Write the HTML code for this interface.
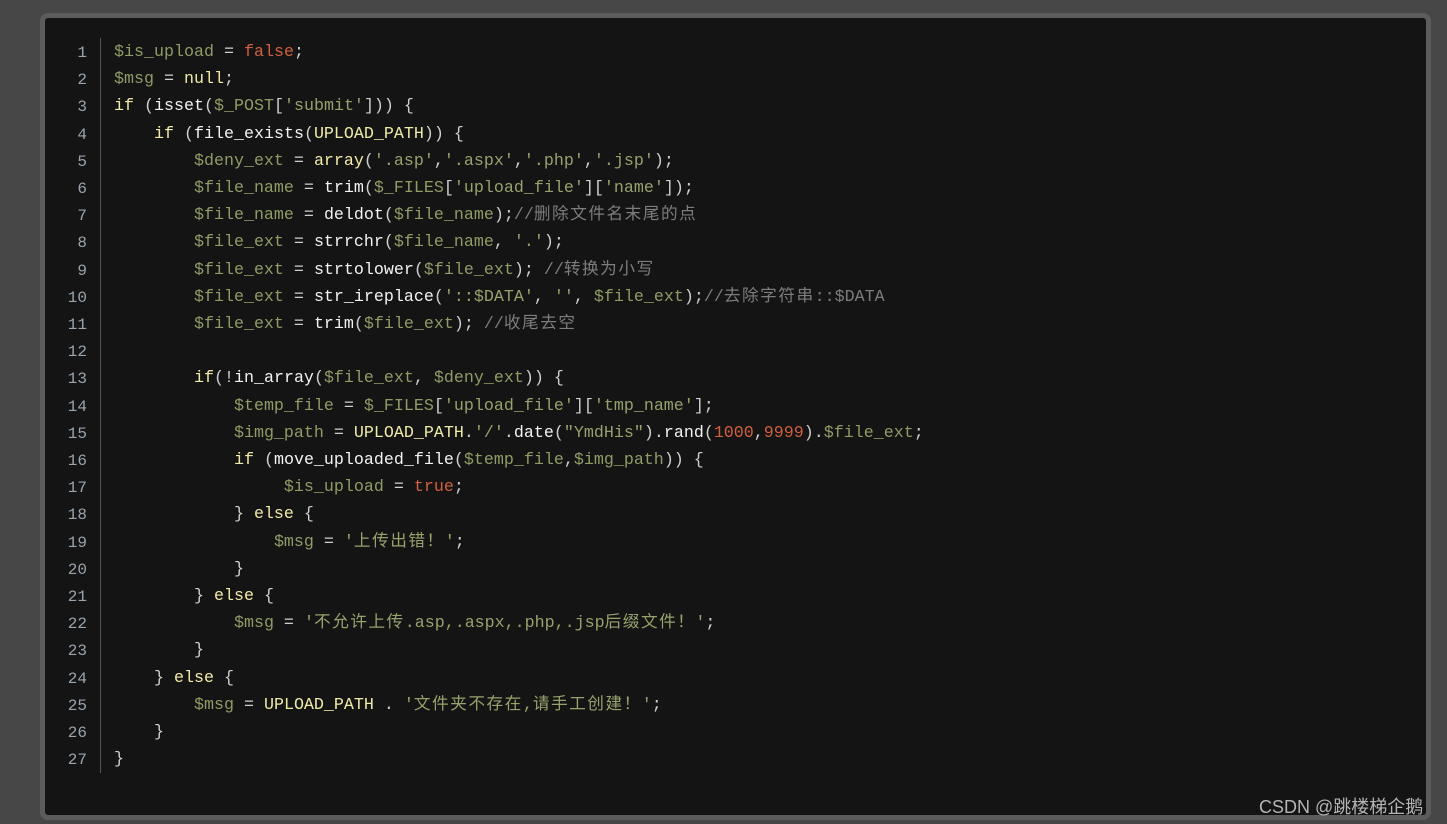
<!DOCTYPE html><html><head><meta charset="utf-8"><style>
body{margin:0;width:1447px;height:824px;background:#474747;overflow:hidden;position:relative;font-family:"Liberation Mono","Noto Sans CJK SC",monospace}
.panel{position:absolute;left:40px;top:13px;width:1381px;height:797px;border:5px solid #5c5c5c;border-radius:8px;background:#141414}
.gut{position:absolute;left:100px;top:38px;width:1px;height:735px;background:#555}
.ln{position:absolute;left:50px;top:40px;width:37px;text-align:right;color:#9aa4ad;font-size:16px;line-height:27.2px}
.code{position:absolute;left:114px;top:39px;font-size:16.67px;line-height:27.2px;color:#cfcfcf;white-space:pre}
.v{color:#8f9c66}.k{color:#f2eaa8}.f{color:#f2f2f2}.b{color:#d0603f}.s{color:#96a26c}.c{color:#7d7d7d}.u{color:#eeeaa8}
.z{letter-spacing:1.5px}
.wm{position:absolute;left:1259px;top:793px;color:#b5b5b5;font:18px "Liberation Sans","Noto Sans CJK SC",sans-serif}
</style></head><body>
<div class="panel"></div><div class="gut"></div>
<div class="ln">1<br>2<br>3<br>4<br>5<br>6<br>7<br>8<br>9<br>10<br>11<br>12<br>13<br>14<br>15<br>16<br>17<br>18<br>19<br>20<br>21<br>22<br>23<br>24<br>25<br>26<br>27</div>
<div class="code"><span class="v">$is_upload</span> = <span class="b">false</span>;
<span class="v">$msg</span> = <span class="k">null</span>;
<span class="k">if</span> (<span class="f">isset</span>(<span class="v">$_POST</span>[<span class="s">'submit'</span>])) {
    <span class="k">if</span> (<span class="f">file_exists</span>(<span class="u">UPLOAD_PATH</span>)) {
        <span class="v">$deny_ext</span> = <span class="k">array</span>(<span class="s">'.asp'</span>,<span class="s">'.aspx'</span>,<span class="s">'.php'</span>,<span class="s">'.jsp'</span>);
        <span class="v">$file_name</span> = <span class="f">trim</span>(<span class="v">$_FILES</span>[<span class="s">'upload_file'</span>][<span class="s">'name'</span>]);
        <span class="v">$file_name</span> = <span class="f">deldot</span>(<span class="v">$file_name</span>);<span class="c">//<span class="z">删除文件名末尾的点</span></span>
        <span class="v">$file_ext</span> = <span class="f">strrchr</span>(<span class="v">$file_name</span>, <span class="s">'.'</span>);
        <span class="v">$file_ext</span> = <span class="f">strtolower</span>(<span class="v">$file_ext</span>); <span class="c">//<span class="z">转换为小写</span></span>
        <span class="v">$file_ext</span> = <span class="f">str_ireplace</span>(<span class="s">'::$DATA'</span>, <span class="s">''</span>, <span class="v">$file_ext</span>);<span class="c">//<span class="z">去除字符串</span>::$DATA</span>
        <span class="v">$file_ext</span> = <span class="f">trim</span>(<span class="v">$file_ext</span>); <span class="c">//<span class="z">收尾去空</span></span>

        <span class="k">if</span>(!<span class="f">in_array</span>(<span class="v">$file_ext</span>, <span class="v">$deny_ext</span>)) {
            <span class="v">$temp_file</span> = <span class="v">$_FILES</span>[<span class="s">'upload_file'</span>][<span class="s">'tmp_name'</span>];
            <span class="v">$img_path</span> = <span class="u">UPLOAD_PATH</span>.<span class="s">'/'</span>.<span class="f">date</span>(<span class="s">"YmdHis"</span>).<span class="f">rand</span>(<span class="b">1000</span>,<span class="b">9999</span>).<span class="v">$file_ext</span>;
            <span class="k">if</span> (<span class="f">move_uploaded_file</span>(<span class="v">$temp_file</span>,<span class="v">$img_path</span>)) {
                 <span class="v">$is_upload</span> = <span class="b">true</span>;
            } <span class="k">else</span> {
                <span class="v">$msg</span> = <span class="s">'<span class="z">上传出错！</span>'</span>;
            }
        } <span class="k">else</span> {
            <span class="v">$msg</span> = <span class="s">'<span class="z">不允许上传</span>.asp,.aspx,.php,.jsp<span class="z">后缀文件！</span>'</span>;
        }
    } <span class="k">else</span> {
        <span class="v">$msg</span> = <span class="u">UPLOAD_PATH</span> . <span class="s">'<span class="z">文件夹不存在</span>,<span class="z">请手工创建！</span>'</span>;
    }
}</div>
<div class="wm">CSDN @跳楼梯企鹅</div>
</body></html>
